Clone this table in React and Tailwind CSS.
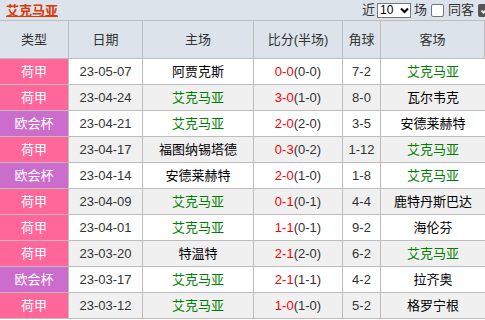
const rows = [
  ['荷甲', '23-05-07', '阿贾克斯', '0-0', '0-0', '7-2', '艾克马亚', 'a'],
  ['荷甲', '23-04-24', '艾克马亚', '3-0', '1-0', '8-0', '瓦尔韦克', 'h'],
  ['欧会杯', '23-04-21', '艾克马亚', '2-0', '2-0', '3-5', '安德莱赫特', 'h'],
  ['荷甲', '23-04-17', '福图纳锡塔德', '0-3', '0-2', '1-12', '艾克马亚', 'a'],
  ['欧会杯', '23-04-14', '安德莱赫特', '2-0', '1-0', '1-8', '艾克马亚', 'a'],
  ['荷甲', '23-04-09', '艾克马亚', '0-1', '0-1', '4-4', '鹿特丹斯巴达', 'h'],
  ['荷甲', '23-04-01', '艾克马亚', '1-1', '0-1', '9-2', '海伦芬', 'h'],
  ['荷甲', '23-03-20', '特温特', '2-1', '2-0', '6-2', '艾克马亚', 'a'],
  ['欧会杯', '23-03-17', '艾克马亚', '2-1', '1-1', '4-2', '拉齐奥', 'h'],
  ['荷甲', '23-03-12', '艾克马亚', '1-0', '1-0', '5-2', '格罗宁根', 'h'],
];

const cols = 'grid grid-cols-[69px_74px_111px_89px_38px_1fr]';
const cell = 'flex items-center justify-center border-r border-[#bdbdbd]';

const App = () => {
  return (
    <div
      className="w-[485px] h-[320px] overflow-hidden bg-white text-[13px] text-[#333]"
      style={{ fontFamily: '"Liberation Sans", "Noto Sans CJK SC", sans-serif' }}
    >
      <div className="h-[20px] bg-[#dce3eb] flex items-center justify-between pl-[6px]">
        <span className="text-[#dd3a0a] font-bold underline text-[13px] leading-none">艾克马亚</span>
        <div className="w-[129px] shrink-0 flex items-center text-[13px] text-[#333] whitespace-nowrap -mr-[6px]">
          <span>近</span>
          <div className="ml-[2px] w-[34px] h-[15px] bg-white border border-[#767676] flex items-center justify-between pl-[2px] pr-[1px] text-[12px] text-black">
            <span>10</span>
            <svg width="9" height="7" viewBox="0 0 9 7"><path d="M1 1.5 L4.5 5 L8 1.5" stroke="#000" strokeWidth="2" fill="none" /></svg>
          </div>
          <span className="ml-[3px]">场</span>
          <span className="ml-[4px] w-[13px] h-[13px] bg-white border border-[#767676] rounded-[2px]"></span>
          <span className="ml-[4px]">同客</span>
          <span className="ml-[4px] w-[13px] h-[13px] shrink-0 bg-[#555] rounded-[2px] flex items-center justify-center">
            <svg width="9" height="9" viewBox="0 0 9 9"><path d="M1.5 4.5 L3.5 6.8 L7.5 2" stroke="#fff" strokeWidth="1.6" fill="none" /></svg>
          </span>
        </div>
      </div>
      <div className={`${cols} h-[39px] bg-[#dce3eb] border-y border-[#bdbdbd]`}>
        {['类型', '日期', '主场', '比分(半场)', '角球', '客场'].map((h) => (
          <div key={h} className={cell}>{h}</div>
        ))}
      </div>
      {rows.map((r, i) => (
        <div key={i} className={`${cols} h-[26px] border-b border-[#bdbdbd] ${i % 2 ? 'bg-[#f0f0f0]' : 'bg-white'}`}>
          <div className={`${cell} text-white ${r[0] === '荷甲' ? 'bg-[#ff6699]' : 'bg-[#cc6ccc]'}`}>{r[0]}</div>
          <div className={cell}>{r[1]}</div>
          <div className={`${cell} ${r[7] === 'h' ? 'text-[#008000]' : 'text-black'}`}>{r[2]}</div>
          <div className={cell}>
            <span className="text-[#ff0000]">{r[3]}</span>
            <span>({r[4]})</span>
          </div>
          <div className={cell}>{r[5]}</div>
          <div className={`${cell} border-r-0 ${r[7] === 'a' ? 'text-[#008000]' : 'text-black'}`}>{r[6]}</div>
        </div>
      ))}
    </div>
  );
};

export default App;
